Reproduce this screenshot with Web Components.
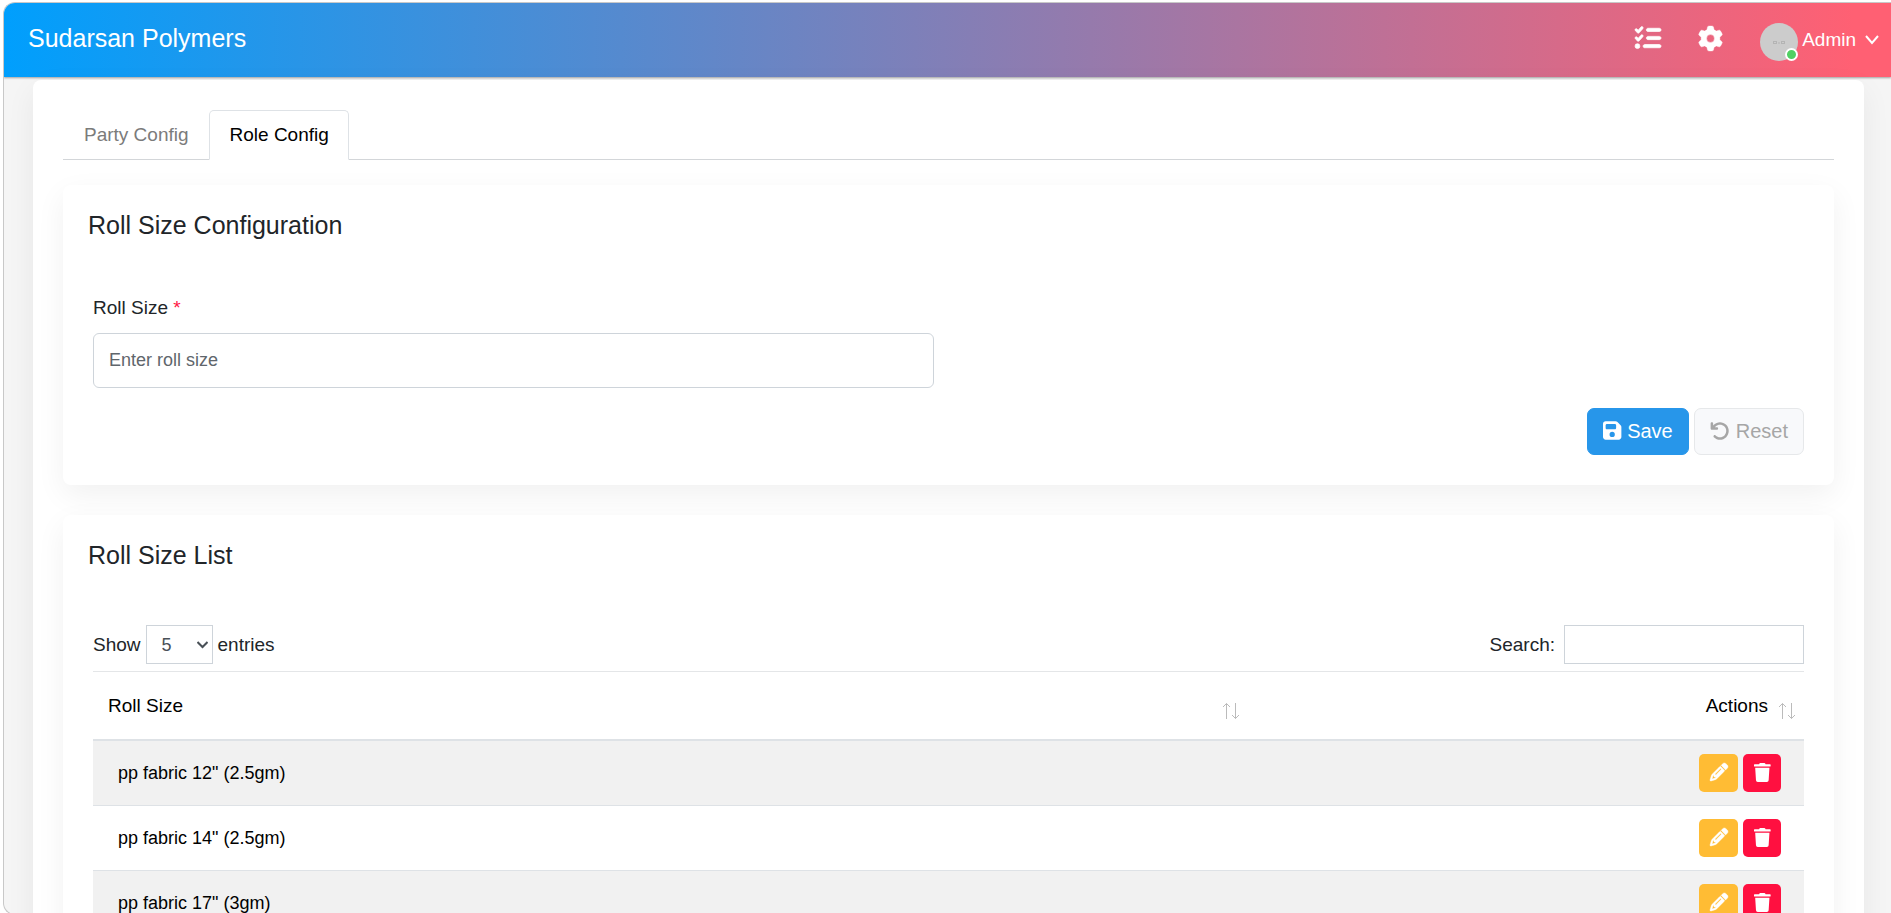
<!DOCTYPE html>
<html lang="en">
<head>
<meta charset="utf-8">
<title>Sudarsan Polymers</title>
<style>
  body {
    margin: 0;
    height: 100vh;
    overflow: hidden;
    background: #fff;
    color: #212529;
    font: 19px/26px "Liberation Sans", Arial, sans-serif;
  }
</style>
</head>
<body>
<app-shell>
  <app-header slot="header" brand="Sudarsan Polymers" user="Admin"></app-header>
  <tab-bar items="Party Config,Role Config" active="Role Config"></tab-bar>
  <content-card heading="Roll Size Configuration">
    <roll-form></roll-form>
  </content-card>
  <content-card heading="Roll Size List">
    <roll-table items='pp fabric 12" (2.5gm)|pp fabric 14" (2.5gm)|pp fabric 17" (3gm)'></roll-table>
  </content-card>
</app-shell>

<script>
const icons = {
    tasks: ['0 0 512 512', 'M152.1 38.2c9.9 8.9 10.7 24 1.8 33.9l-72 80c-4.4 4.9-10.6 7.8-17.2 7.9s-12.9-2.4-17.6-7L7 113C-2.3 103.6-2.3 88.4 7 79s24.6-9.4 33.9 0l22.1 22.1 55.1-61.2c8.9-9.9 24-10.7 33.9-1.8zm0 160c9.9 8.9 10.7 24 1.8 33.9l-72 80c-4.4 4.9-10.6 7.8-17.2 7.9s-12.9-2.4-17.6-7L7 273c-9.4-9.4-9.4-24.6 0-33.9s24.6-9.4 33.9 0l22.1 22.1 55.1-61.2c8.9-9.9 24-10.7 33.9-1.8zM224 96c0-17.7 14.3-32 32-32H480c17.7 0 32 14.3 32 32s-14.3 32-32 32H256c-17.7 0-32-14.3-32-32zm0 160c0-17.7 14.3-32 32-32H480c17.7 0 32 14.3 32 32s-14.3 32-32 32H256c-17.7 0-32-14.3-32-32zM160 416c0-17.7 14.3-32 32-32H480c17.7 0 32 14.3 32 32s-14.3 32-32 32H192c-17.7 0-32-14.3-32-32zM48 368a48 48 0 1 1 0 96 48 48 0 1 1 0-96z', 14],
    gear: ['0 0 512 512', 'M495.9 166.6c3.2 8.7 .5 18.4-6.4 24.6l-43.3 39.4c1.1 8.3 1.7 16.8 1.7 25.4s-.6 17.1-1.7 25.4l43.3 39.4c6.9 6.2 9.6 15.9 6.4 24.6c-4.4 11.9-9.7 23.3-15.8 34.3l-4.7 8.1c-6.6 11-14 21.4-22.1 31.2c-5.9 7.2-15.7 9.6-24.5 6.8l-55.7-17.7c-13.4 10.3-28.2 18.9-44 25.4l-12.5 57.1c-2 9.1-9 16.3-18.2 17.8c-13.8 2.3-28 3.5-42.5 3.5s-28.7-1.2-42.5-3.5c-9.2-1.5-16.2-8.7-18.2-17.8l-12.5-57.1c-15.8-6.5-30.6-15.1-44-25.4L83.1 425.9c-8.8 2.8-18.6 .3-24.5-6.8c-8.1-9.8-15.5-20.2-22.1-31.2l-4.7-8.1c-6.1-11-11.4-22.4-15.8-34.3c-3.2-8.7-.5-18.4 6.4-24.6l43.3-39.4C64.6 273.1 64 264.6 64 256s.6-17.1 1.7-25.4L22.4 191.2c-6.9-6.2-9.6-15.9-6.4-24.6c4.4-11.9 9.7-23.3 15.8-34.3l4.7-8.1c6.6-11 14-21.4 22.1-31.2c5.9-7.2 15.7-9.6 24.5-6.8l55.7 17.7c13.4-10.3 28.2-18.9 44-25.4l12.5-57.1c2-9.1 9-16.3 18.2-17.8C227.3 1.2 241.5 0 256 0s28.7 1.2 42.5 3.5c9.2 1.5 16.2 8.7 18.2 17.8l12.5 57.1c15.8 6.5 30.6 15.1 44 25.4l55.7-17.7c8.8-2.8 18.6-.3 24.5 6.8c8.1 9.8 15.5 20.2 22.1 31.2l4.7 8.1c6.1 11 11.4 22.4 15.8 34.3zM256 336a80 80 0 1 0 0-160 80 80 0 1 0 0 160z', 8],
    save: ['0 0 448 512', 'M64 32C28.7 32 0 60.7 0 96V416c0 35.3 28.7 64 64 64H384c35.3 0 64-28.7 64-64V173.3c0-17-6.7-33.3-18.7-45.3L352 50.7C340 38.7 323.7 32 306.7 32H64zm0 96c0-17.7 14.3-32 32-32H288c17.7 0 32 14.3 32 32v64c0 17.7-14.3 32-32 32H96c-17.7 0-32-14.3-32-32V128zM224 288a64 64 0 1 1 0 128 64 64 0 1 1 0-128z'],
    undo: ['0 0 512 512', 'M125.7 160H176c17.7 0 32 14.3 32 32s-14.3 32-32 32H48c-17.7 0-32-14.3-32-32V64c0-17.7 14.3-32 32-32s32 14.3 32 32v51.2L97.6 97.6c87.5-87.5 229.3-87.5 316.8 0s87.5 229.3 0 316.8s-229.3 87.5-316.8 0c-12.5-12.5-12.5-32.8 0-45.3s32.8-12.5 45.3 0c62.5 62.5 163.8 62.5 226.3 0s62.5-163.8 0-226.3s-163.8-62.5-226.3 0L125.7 160z'],
    pencil: ['0 0 512 512', 'M410.3 231l11.3-11.3-33.9-33.9-62.1-62.1L291.7 89.8l-11.3 11.3-22.6 22.6L58.6 322.9c-10.4 10.4-18 23.3-22.2 37.4L1 480.7c-2.5 8.4-.2 17.5 6.1 23.7s15.3 8.5 23.7 6.1l120.3-35.4c14.1-4.2 27-11.8 37.4-22.2L387.7 253.7 410.3 231zM160 399.4l-9.1 22.7c-4 3.1-8.5 5.4-13.3 6.9L59.4 452l23-78.1c1.4-4.9 3.8-9.4 6.9-13.3l22.7-9.1v32c0 8.8 7.2 16 16 16h32zM362.7 18.7L348.3 33.2 325.7 55.8 314.3 67.1l33.9 33.9 62.1 62.1 33.9 33.9 11.3-11.3 22.6-22.6 14.5-14.5c25-25 25-65.5 0-90.5L453.3 18.7c-25-25-65.5-25-90.5 0zm-47.4 168l-144 144c-6.2 6.2-16.4 6.2-22.6 0s-6.2-16.4 0-22.6l144-144c6.2-6.2 16.4-6.2 22.6 0s6.2 16.4 0 22.6z', 12],
    trash: ['0 0 448 512', 'M432 32H312l-9.4-18.7A24 24 0 0 0 281.1 0H166.8a23.72 23.72 0 0 0-21.4 13.3L136 32H16A16 16 0 0 0 0 48v32a16 16 0 0 0 16 16h416a16 16 0 0 0 16-16V48a16 16 0 0 0-16-16zM53.2 467a48 48 0 0 0 47.9 45h245.8a48 48 0 0 0 47.9-45L416 128H32z'],
};

const icon = (name, size) => {
    const [box, path, stroke = 0] = icons[name];
    return `<svg viewBox="${box}" height="${size}" fill="currentColor" stroke="currentColor" stroke-width="${stroke}" overflow="visible" aria-hidden="true"><path d="${path}"/></svg>`;
};

class AppShell extends HTMLElement {
    constructor() {
        super();
        this.attachShadow({ mode: 'open' }).innerHTML = `
          <style>
            :host {
              display: flex;
              flex-direction: column;
              box-sizing: border-box;
              height: 100%;
              border: 1px solid #c8c8c8;
              border-right: 0;
              border-radius: 12px 0 0 12px;
              margin: 2px 0 0 3px;
              background: #f5f5f5;
              overflow: hidden;
            }
            main {
              flex: 1 0 auto;
              margin: 3px 27px 0 29px;
              padding: 30px;
              border-radius: 8px;
              background: #fff;
              box-shadow: 0 10px 30px rgba(0, 0, 0, .06);
            }
          </style>
          <slot name="header"></slot>
          <main><slot></slot></main>
        `;
    }
}

class AppHeader extends HTMLElement {
    constructor() {
        super();
        this.attachShadow({ mode: 'open' });
    }

    connectedCallback() {
        this.shadowRoot.innerHTML = `
          <style>
            :host { display: block; }
            header {
              display: flex;
              align-items: center;
              height: 74px;
              padding: 0 12px 0 24px;
              background: linear-gradient(to right, #009ffd, #ff6073 98%);
              box-shadow: 0 1px 2px rgba(0, 0, 0, .35);
              color: #fff;
            }
            .brand {
              margin-right: auto;
              padding-bottom: 4px;
              color: inherit;
              font-size: 25px;
              text-decoration: none;
            }
            button {
              display: flex;
              align-items: center;
              padding: 0;
              border: 0;
              background: none;
              color: inherit;
              font: inherit;
            }
            .tool { margin-right: 37px; padding-bottom: 4px; }
            .user { gap: 4px; }
            .avatar {
              position: relative;
              width: 38px;
              height: 38px;
              margin-top: 4px;
              border-radius: 50%;
              background: #ccc;
            }
            .avatar svg { display: block; }
            .status {
              position: absolute;
              right: 0;
              bottom: 0;
              width: 9px;
              height: 9px;
              border: 2px solid #fff;
              border-radius: 50%;
              background: #51d064;
            }
            .caret { margin-left: 5px; }
          </style>
          <header>
            <a class="brand" href="#">${this.getAttribute('brand')}</a>
            <button class="tool" aria-label="Tasks">${icon('tasks', 26)}</button>
            <button class="tool" aria-label="Settings">${icon('gear', 25)}</button>
            <button class="user">
              <span class="avatar">
                <svg viewBox="0 0 38 38" fill="none" stroke="#b4b4b4">
                  <rect x="13.5" y="18.5" width="3" height="2"/>
                  <path d="M18 20h2"/>
                  <rect x="21.5" y="18.5" width="3" height="2"/>
                </svg>
                <span class="status"></span>
              </span>
              <span>${this.getAttribute('user')}</span>
              <svg class="caret" width="14" height="10" viewBox="0 0 14 10" fill="none" stroke="currentColor" stroke-width="2"><path d="M1 1l6 7 6-7"/></svg>
            </button>
          </header>
        `;
    }
}

class TabBar extends HTMLElement {
    constructor() {
        super();
        this.attachShadow({ mode: 'open' });
    }

    connectedCallback() {
        const active = this.getAttribute('active');
        const tabs = this.getAttribute('items').split(',').map((t) =>
            `<button role="tab" aria-selected="${t === active}">${t}</button>`).join('');
        this.shadowRoot.innerHTML = `
          <style>
            :host { display: block; margin-bottom: 25px; }
            nav {
              display: flex;
              border-bottom: 1px solid #d3d6d9;
            }
            button {
              margin-bottom: -1px;
              padding: 11px 19px 11px 20px;
              border: 1px solid transparent;
              border-radius: 5px 5px 0 0;
              background: none;
              color: #7b7b7b;
              font: inherit;
            }
            [aria-selected="true"] {
              border-color: #dee2e6 #dee2e6 #fff;
              background: #fff;
              color: #000;
            }
          </style>
          <nav role="tablist">${tabs}</nav>
        `;
    }
}

class ContentCard extends HTMLElement {
    constructor() {
        super();
        this.attachShadow({ mode: 'open' });
    }

    connectedCallback() {
        this.shadowRoot.innerHTML = `
          <style>
            :host {
              display: block;
              margin-bottom: 30px;
              border-radius: 8px;
              background: #fff;
              box-shadow: 0 10px 30px rgba(0, 0, 0, .06);
            }
            h2 {
              margin: 0;
              padding: 25px;
              font-size: 25px;
              font-weight: 400;
              line-height: 30px;
            }
            div { padding: 30px; }
          </style>
          <h2>${this.getAttribute('heading')}</h2>
          <div><slot></slot></div>
        `;
    }
}

class RollForm extends HTMLElement {
    constructor() {
        super();
        this.attachShadow({ mode: 'open' }).innerHTML = `
          <style>
            :host { display: block; }
            .field {
              display: flex;
              flex-direction: column;
              gap: 12px;
              width: calc(50% - 15px);
            }
            .required { color: #ff1744; }
            input {
              box-sizing: border-box;
              height: 55px;
              padding: 0 15px;
              border: 1px solid #ced4da;
              border-radius: 6px;
              background: #fff;
              font: inherit;
              font-size: 18px;
            }
            input::placeholder { color: #5f666c; }
            .actions {
              display: flex;
              justify-content: flex-end;
              gap: 5px;
              margin-top: 20px;
            }
            button {
              display: flex;
              align-items: center;
              gap: 6px;
              height: 47px;
              padding: 0 15px 2px;
              border: 1px solid #2796ea;
              border-radius: 7px;
              background: #2796ea;
              color: #fff;
              font: inherit;
              font-size: 20px;
            }
            .reset {
              border-color: #e6e8ea;
              background: #f8f9fb;
              color: #a6a6a6;
            }
          </style>
          <form>
            <div class="field">
              <label for="size">Roll Size <span class="required">*</span></label>
              <input id="size" placeholder="Enter roll size">
            </div>
            <div class="actions">
              <button type="button">${icon('save', 21)}Save</button>
              <button type="reset" class="reset">${icon('undo', 20)}Reset</button>
            </div>
          </form>
        `;
    }
}

class RollTable extends HTMLElement {
    constructor() {
        super();
        this.attachShadow({ mode: 'open' });
    }

    connectedCallback() {
        const sort = '<svg class="sort" width="18" height="18" viewBox="0 0 18 18" fill="none" stroke="#bbb"><path d="M4.500 17V1.500M1 5l3.500-3.500L8 5M13.500 1v15.500M10 13l3.500 3.500L17 13"/></svg>';
        const rows = this.getAttribute('items').split('|').map((name) => `
            <tr>
              <td>${name}</td>
              <td>
                <div class="actions">
                  <button class="edit" aria-label="Edit">${icon('pencil', 18)}</button>
                  <button class="delete" aria-label="Delete">${icon('trash', 19)}</button>
                </div>
              </td>
            </tr>`).join('');
        this.shadowRoot.innerHTML = `
          <style>
            :host { display: block; }
            .toolbar {
              display: flex;
              justify-content: space-between;
              margin-bottom: 7px;
            }
            label {
              display: flex;
              align-items: center;
              gap: 5px;
            }
            label.search { gap: 9px; }
            select, input {
              box-sizing: border-box;
              height: 39px;
              border: 1px solid #ced4da;
              background: #fff;
              color: #495057;
              font: inherit;
              font-size: 18px;
            }
            .entries {
              display: grid;
              align-items: center;
            }
            .entries > * { grid-area: 1 / 1; }
            .entries svg {
              justify-self: end;
              margin-right: 5px;
              pointer-events: none;
            }
            select {
              width: 67px;
              padding: 0 15px;
              border-radius: 0;
              appearance: none;
            }
            input { width: 240px; }
            table {
              width: 100%;
              border-collapse: collapse;
              color: #000;
            }
            th {
              height: 67px;
              padding: 0 8px 0 15px;
              border-top: 1px solid #e4e6e8;
              border-bottom: 2px solid #dee2e6;
              font-weight: 400;
            }
            th:last-child { width: 533px; }
            .head {
              display: flex;
              justify-content: space-between;
              align-items: center;
            }
            th:last-child .head { justify-content: flex-end; gap: 10px; }
            .sort { margin-top: 10px; }
            td {
              height: 64px;
              padding: 0 23px 0 25px;
              border-bottom: 1px solid #dee2e6;
              font-size: 18px;
            }
            tbody tr:nth-child(odd) { background: #f1f1f1; }
            .actions {
              display: flex;
              justify-content: flex-end;
              gap: 5px;
            }
            button {
              display: flex;
              align-items: center;
              justify-content: center;
              width: 38px;
              height: 38px;
              padding: 0 0 2px;
              border: 0;
              border-radius: 5px;
              color: #fff;
            }
            .edit { width: 39px; background: #ffbc34; }
            .delete { background: #ff1040; }
          </style>
          <div class="toolbar">
            <label>Show
              <span class="entries">
                <select><option>5</option><option>10</option><option>25</option></select>
                <svg width="11" height="8" viewBox="0 0 11 8" fill="none" stroke="#495057" stroke-width="2"><path d="M.5 1l5 5 5-5"/></svg>
              </span>
              entries
            </label>
            <label class="search">Search: <input type="search"></label>
          </div>
          <table>
            <thead>
              <tr>
                <th><div class="head">Roll Size ${sort}</div></th>
                <th><div class="head">Actions ${sort}</div></th>
              </tr>
            </thead>
            <tbody>${rows}</tbody>
          </table>
        `;
    }
}

customElements.define('app-shell', AppShell);
customElements.define('app-header', AppHeader);
customElements.define('tab-bar', TabBar);
customElements.define('content-card', ContentCard);
customElements.define('roll-form', RollForm);
customElements.define('roll-table', RollTable);
</script>
</body>
</html>
